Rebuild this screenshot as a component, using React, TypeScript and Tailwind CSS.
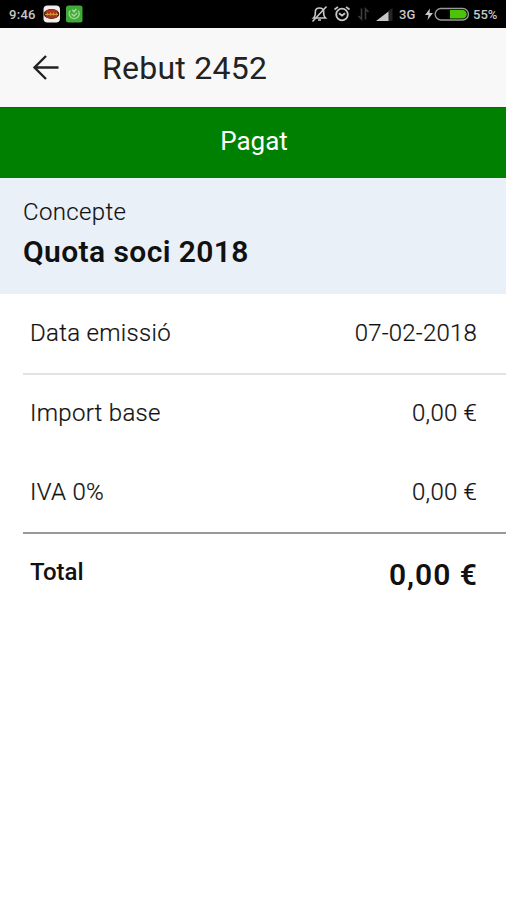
import React from 'react';

interface Row {
  label: string;
  value: string;
}

const amounts: Row[] = [
  { label: 'Import base', value: '0,00 €' },
  { label: 'IVA 0%', value: '0,00 €' },
];

function StatusBar() {
  return (
    <div className="flex h-7 items-center bg-black pl-[9px] pr-2 text-[#c8c8c8]">
      <span className="w-[33px] whitespace-nowrap pt-px text-[13px] font-medium leading-4 tracking-[0.3px]">9:46</span>
      <svg className="h-[18px] w-[18px]" viewBox="0 0 18 18">
        <rect x="1.5" y="0.5" width="16.5" height="17" rx="4" fill="#f1efed" />
        <ellipse cx="9.5" cy="9" rx="7.8" ry="4.9" fill="#4b2b10" />
        <ellipse cx="9.5" cy="6.8" rx="6" ry="2.2" fill="#b8301a" />
        <ellipse cx="9.5" cy="11.2" rx="6" ry="2.1" fill="#a0361a" />
        <path d="M3 9.3h13M5.5 7.8v2.8M8.5 7.6v3M11.5 7.6v3M14.5 7.800v2.8" stroke="#c99838" strokeWidth="1.2" />
      </svg>
      <svg className="ml-[5px] h-[18px] w-[18px]" viewBox="0 0 18 18">
        <rect x="1" y="0.5" width="16.5" height="17" rx="2.5" fill="#3faa38" />
        <path d="M5.2 5.6a5 5 0 1 0 8 0" fill="none" stroke="#9bd98f" strokeWidth="1.5" />
        <path d="M6.500 8.800 9 11l3.200-3M7.300 4.800l1.700 2L11.300 4" fill="none" stroke="#a5dd9a" strokeWidth="1.400" />
      </svg>
      <div className="ml-auto flex items-center">
        <svg className="h-[18px] w-[18px]" viewBox="0 0 18 18" fill="none" stroke="currentColor" strokeWidth="1.6">
          <path d="M2.5 13h12c-1.3-1.2-1.8-2-1.8-4V7.200c0-2.5-1.7-4.2-4.2-4.200S4.300 4.700 4.300 7.200V9c0 2-.5 2.800-1.800 4Z" />
          <path d="M7 15h3M1.5 16.500 15.500 1.500" />
        </svg>
        <svg className="ml-[5px] h-[18px] w-[18px]" viewBox="0 0 18 18" fill="none" stroke="currentColor" strokeWidth="1.8">
          <circle cx="8" cy="9.5" r="5.8" />
          <path d="M.5 4.500 4 1.900M15.500 4.500 12 1.900M5 8.200l3 2.300 3-2.300" />
        </svg>
        <svg className="ml-1 h-[18px] w-4" viewBox="0 0 16 18" fill="none" stroke="#3d3d3d" strokeWidth="1.6">
          <path d="M5.500 3.500V14L2.500 11M9.500 14.500V4l3 3" />
        </svg>
        <svg className="ml-1 h-[18px] w-[18px]" viewBox="0 0 18 18">
          <path d="M12 6 16.500 3v13H12Z" fill="#252525" />
          <path d="M0 16 12.500 6.500V16Z" fill="currentColor" />
        </svg>
        <span className="ml-[5px] w-5 whitespace-nowrap pt-px text-[13px] font-medium leading-4 tracking-[0.2px]">3G</span>
        <svg className="ml-[5px] h-4 w-[10px]" viewBox="0 0 10 16">
          <path d="M6 2.500 1 9h3.500L3.500 14 9 7H5.500Z" fill="currentColor" />
        </svg>
        <svg className="h-4 w-9" viewBox="0 0 36 16">
          <rect x="1.200" y="2.500" width="33.200" height="11.500" rx="5.700" fill="none" stroke="#999999" strokeWidth="1.400" />
          <path d="M16 4h12.500a4.250 4.250 0 0 1 0 8.500H16Z" fill="#4cc40a" />
        </svg>
        <span className="ml-[3px] w-[25px] whitespace-nowrap pt-px text-[13px] font-medium leading-4">55%</span>
      </div>
    </div>
  );
}

function DetailRow({ label, value }: Row) {
  return (
    <div className="flex h-[79px] items-center justify-between pb-[3px] pl-[7px] pr-[29px] text-[24px] leading-8 [-webkit-text-stroke:0.2px]">
      <span className="tracking-[0.3px]">{label}</span>
      <span className="tracking-[0.2px]">{value}</span>
    </div>
  );
}

function App() {
  return (
    <div className="h-[900px] w-full bg-white font-['Roboto',sans-serif] text-[#111111]">
      <StatusBar />
      <header className="flex h-[79px] items-center bg-[#f8f8f8] text-[#222222]">
        <svg className="ml-8 h-7 w-7" viewBox="0 0 28 28" fill="none" stroke="currentColor" strokeWidth="2.4">
          <path d="M26.500 13.500H2.500M14 2 2.500 13.500 14 25" />
        </svg>
        <h1 className="ml-[42px] text-[32px] leading-10 tracking-[0.25px]">Rebut 2452</h1>
      </header>

      <div className="flex h-[71px] items-center justify-center border-t border-[#17601a] bg-[#008000] pb-1 pl-0.5 text-[26px] leading-8 text-white">
        Pagat
      </div>

      <section className="h-[116px] bg-[#e9f0f8] px-[23px] pt-[18px]">
        <div className="text-[24px] font-light leading-8 tracking-[0.35px] [-webkit-text-stroke:0.15px]">Concepte</div>
        <div className="mt-1 text-[30px] font-semibold leading-10 tracking-[0.4px]">Quota soci 2018</div>
      </section>

      <section className="ml-[23px] font-light">
        <div className="h-[81px] border-b-2 border-[#e2e2e2] pt-px">
          <DetailRow label="Data emissió" value="07-02-2018" />
        </div>
        <div className="h-[159px] border-b-2 border-[#999999]">
          {amounts.map((row) => (
            <DetailRow key={row.label} label={row.label} value={row.value} />
          ))}
        </div>
        <div className="flex h-[82px] items-center justify-between pl-[7px] pr-7">
          <span className="pb-1.5 text-[24px] font-medium leading-8">Total</span>
          <span className="text-[30px] font-semibold leading-10 tracking-[1px]">0,00 €</span>
        </div>
      </section>
    </div>
  );
}

export default App;
